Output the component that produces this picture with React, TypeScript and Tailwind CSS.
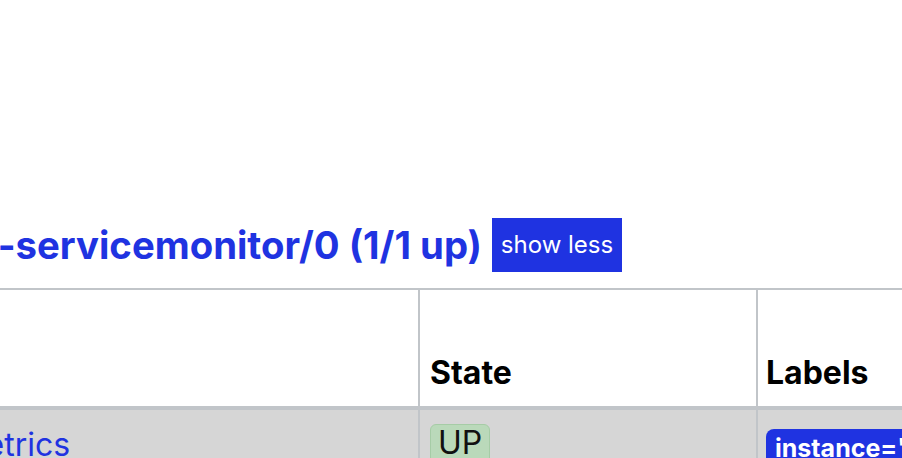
import React from "react"

const blue = "text-[#1f33e1]"

function TargetsHeader() {
  return (
    <div className="flex w-[622px] items-center justify-end gap-[10px] whitespace-nowrap">
      <h2 className={`text-[38.3px] font-bold leading-none ${blue}`}>
        monitoring/prometheus-servicemonitor/0 (1/1 up)
      </h2>
      <button className="h-[54px] w-[130px] shrink-0 bg-[#1f33e1] text-[24px] leading-none text-white">
        show less
      </button>
    </div>
  )
}

function TargetsTable() {
  return (
    <div className="ml-[-401px] mt-[16px] w-[1620px] border-t-2 border-[#c1c5c9] text-[32px] leading-[48px]">
      <div className="grid grid-cols-[819px_338px_463px] border-b-4 border-[#c1c5c9]">
        <div className="flex h-[116px] items-end px-[10px] pb-[9px] font-bold text-black">
          Endpoint
        </div>
        <div className="flex h-[116px] items-end border-l-2 border-[#c1c5c9] pl-[10px] pb-[9px] font-bold text-black">
          State
        </div>
        <div className="flex h-[116px] items-end border-l-2 border-[#c1c5c9] pl-[8px] pb-[9px] font-bold text-black">
          Labels
        </div>
      </div>
      <div className="grid h-[120px] grid-cols-[819px_338px_463px] bg-[#d6d6d6]">
        <div className="px-[10px] pt-[11px]">
          <a href="#" className={blue}>
            http://10.244.1.17:8080/metrics
          </a>
        </div>
        <div className="flex items-start border-l-2 border-[#c1c5c9] pl-[10px] pt-[14px]">
          <span className="rounded-[6px] border border-[#a6cca6] bg-[#bad9ba] px-[7px] pt-[2px] pb-[4px] text-[32px] leading-none text-[#111]">
            UP
          </span>
        </div>
        <div className="flex items-start border-l-2 border-[#c1c5c9] pl-[8px] pt-[19px]">
          <span className="whitespace-nowrap rounded-[8px] bg-[#1f33e1] px-[9px] pt-[7px] pb-[6px] text-[25px] font-bold leading-none text-white">
            instance="10.244.1.17:8080"
          </span>
        </div>
      </div>
    </div>
  )
}

export default function App() {
  return (
    <div className="h-[458px] w-[902px] overflow-hidden bg-white font-['Inter',sans-serif]">
      <div className="pt-[218px]">
        <TargetsHeader />
        <TargetsTable />
      </div>
    </div>
  )
}
